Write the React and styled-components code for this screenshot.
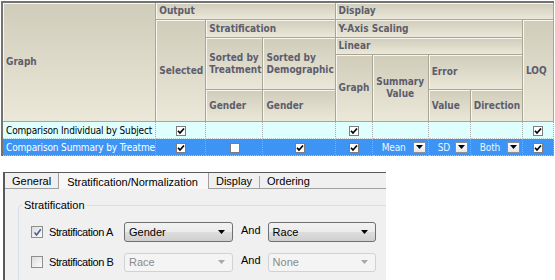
import React from 'react';
import styled, { createGlobalStyle } from 'styled-components';

const GlobalStyle = createGlobalStyle`
  body {
    margin: 0;
    background: #fff;
    overflow: hidden;
    font-family: "DejaVu Sans Condensed", "Liberation Sans", sans-serif;
  }
`;

const Page = styled.div`
  padding: 1px 0 0 1px;
`;

// ---- grid (top) ----

const Grid = styled.table`
  width: 553px;
  table-layout: fixed;
  border-collapse: separate;
  border-spacing: 0;
  border-top: 2px solid #737373;
  border-left: 2px solid #737373;
  font-size: 10px;
`;

const HeadRow = styled.tr`
  height: ${p => p.$h}px;
`;

const Th = styled.th`
  padding: 0 3px;
  text-align: ${p => (p.$center ? 'center' : 'left')};
  vertical-align: middle;
  font-weight: bold;
  color: #5d5d6d;
  line-height: 12px;
  background: linear-gradient(#d0ccba, #ebe8d9);
  border-right: 1px solid #a9a696;
  border-bottom: 1px solid #a9a696;
  box-shadow: inset 1px 1px 0 #f7f6ef;
`;

const DataRow = styled.tr`
  height: 17px;
  background: ${p => (p.$selected ? '#3d94f4' : '#dfffff')};
  color: ${p => (p.$selected ? '#fff' : '#000')};
`;

const Td = styled.td`
  padding: 0 2px 0 3px;
  white-space: nowrap;
  overflow: hidden;
  letter-spacing: -0.15px;
  text-align: ${p => (p.$center ? 'center' : 'left')};
  border-right: 1px dotted #a8a8a8;
  border-bottom: 1px dotted #c4c4c4;
  line-height: 15px;
`;

const ComboCell = styled.div`
  display: flex;
  align-items: center;
  justify-content: space-between;
  padding-left: 6px;
  color: #eef4ff;
`;

const GridCheck = styled.span`
  display: inline-flex;
  align-items: center;
  justify-content: center;
  width: 10px;
  height: 10px;
  box-sizing: border-box;
  border: 1px solid #7d7d7d;
  background: #fff;
  vertical-align: middle;
`;

const DropBtn = styled.span`
  display: flex;
  align-items: center;
  justify-content: center;
  width: 13px;
  height: 11px;
  box-sizing: border-box;
  border: 1px solid #8e8e8e;
  background: linear-gradient(#ffffff, #e6e6e6);
`;

const Tick = ({ color = '#000' }) => (
  <svg width="8" height="8" viewBox="0 0 8 8">
    <path d="M1 3.8 L3 6 L7 1.5" fill="none" stroke={color} strokeWidth="1.7" />
  </svg>
);

const Arrow = ({ color = '#000', w = 7, h = 4 }) => (
  <svg width={w} height={h} viewBox={`0 0 ${w} ${h}`}>
    <polygon points={`0,0 ${w},0 ${w / 2},${h}`} fill={color} />
  </svg>
);

const Check = ({ on }) => <GridCheck>{on && <Tick />}</GridCheck>;

const Drop = ({ value }) => (
  <ComboCell>
    <span>{value}</span>
    <DropBtn>
      <Arrow />
    </DropBtn>
  </ComboCell>
);

// ---- dialog (bottom) ----

const Dialog = styled.div`
  margin: 16px 0 0 2px;
  width: 383px;
  height: 108px;
  box-sizing: border-box;
  border-top: 1px solid #5a5a5a;
  border-left: 2px solid #5a5a5a;
  background: #f0f0f0;
  font-family: "Liberation Sans", Arial, sans-serif;
  font-size: 11px;
  color: #000;
  display: flex;
  flex-direction: column;
  overflow: hidden;
`;

const TabStrip = styled.div`
  display: flex;
  height: 18px;
  border-bottom: 1px solid #a0a0a0;
`;

const Tab = styled.div`
  display: flex;
  align-items: center;
  padding: ${p => (p.$active ? '1px 10px 0 8px' : '1px 7px 0')};
  background: ${p => (p.$active ? '#f7f7f7' : 'transparent')};
  border-left: ${p => (p.$active ? '1px solid #a0a0a0' : 'none')};
  border-right: ${p => (p.$active ? '1px solid #a0a0a0' : 'none')};
  margin-bottom: ${p => (p.$active ? '-1px' : '0')};
`;

const TabSep = styled.span`
  width: 1px;
  height: 12px;
  margin-top: 3px;
  background: #a8a8a8;
`;

const Panel = styled.div`
  flex: 1;
  padding: 10px 0 0 13px;
`;

const Group = styled.fieldset`
  margin: 0;
  width: 500px;
  padding: 2px 0 20px 3px;
  border: 1px solid #d5dfe5;
  border-radius: 3px;
`;

const Legend = styled.legend`
  padding: 0 2px;
  line-height: 12px;
`;

const OptRow = styled.div`
  display: flex;
  align-items: center;
  height: 20px;
  margin: ${p => (p.$first ? '9px' : '10px')} 0 0 9px;
`;

const OptLabel = styled.label`
  display: flex;
  align-items: center;
  gap: 6px;
  width: 93px;
  letter-spacing: -0.4px;
`;

const WinCheck = styled.span`
  display: inline-flex;
  align-items: center;
  justify-content: center;
  width: 12px;
  height: 12px;
  box-sizing: border-box;
  border: 1px solid #8e8f8f;
  background: linear-gradient(135deg, #dcdcdc, #fcfcfc);
`;

const Combo = styled.div`
  width: ${p => p.$w}px;
  height: ${p => (p.$disabled ? 19 : 20)}px;
  box-sizing: border-box;
  display: flex;
  align-items: center;
  justify-content: space-between;
  padding: 0 7px 0 4px;
  border: 1px solid ${p => (p.$disabled ? '#d2d2d2' : '#707070')};
  border-radius: 3px;
  color: ${p => (p.$disabled ? '#8a8a8a' : '#000')};
  background: ${p =>
    p.$disabled
      ? '#f4f4f4'
      : 'linear-gradient(#f2f2f2 0%, #ebebeb 50%, #dddddd 51%, #cfcfcf 100%)'};
`;

const And = styled.span`
  margin: 0 7px 5px 8px;
`;

const Option = ({ label, checked, first, a, b, disabled }) => (
  <OptRow $first={first}>
    <OptLabel>
      <WinCheck>
        {checked && (
          <svg width="9" height="9" viewBox="0 0 9 9">
            <path d="M1.5 4.5 L3.6 7 L7.8 1.3" fill="none" stroke="#4a5f97" strokeWidth="1.6" />
          </svg>
        )}
      </WinCheck>
      {label}
    </OptLabel>
    <Combo $w={109} $disabled={disabled}>
      <span>{a}</span>
      <Arrow color={disabled ? '#a8a8a8' : '#000'} />
    </Combo>
    <And>And</And>
    <Combo $w={108} $disabled={disabled}>
      <span>{b}</span>
      <Arrow color={disabled ? '#a8a8a8' : '#000'} />
    </Combo>
  </OptRow>
);

export default function App() {
  return (
    <Page>
      <GlobalStyle />
      <Grid>
        <colgroup>
          <col style={{ width: 153 }} />
          <col style={{ width: 50 }} />
          <col style={{ width: 57 }} />
          <col style={{ width: 72 }} />
          <col style={{ width: 37 }} />
          <col style={{ width: 56 }} />
          <col style={{ width: 42 }} />
          <col style={{ width: 52 }} />
          <col style={{ width: 31 }} />
        </colgroup>
        <thead>
          <HeadRow $h={17}>
            <Th rowSpan={5}>Graph</Th>
            <Th colSpan={3}>Output</Th>
            <Th colSpan={5}>Display</Th>
          </HeadRow>
          <HeadRow $h={18}>
            <Th rowSpan={4}>Selected</Th>
            <Th colSpan={2}>Stratification</Th>
            <Th colSpan={4}>Y-Axis Scaling</Th>
            <Th rowSpan={4}>LOQ</Th>
          </HeadRow>
          <HeadRow $h={17}>
            <Th rowSpan={2}>Sorted by Treatment</Th>
            <Th rowSpan={2}>Sorted by Demographic</Th>
            <Th colSpan={4}>Linear</Th>
          </HeadRow>
          <HeadRow $h={35}>
            <Th rowSpan={2}>Graph</Th>
            <Th rowSpan={2} $center>
              Summary Value
            </Th>
            <Th colSpan={2}>Error</Th>
          </HeadRow>
          <HeadRow $h={32}>
            <Th>Gender</Th>
            <Th>Gender</Th>
            <Th>Value</Th>
            <Th>Direction</Th>
          </HeadRow>
        </thead>
        <tbody>
          <DataRow>
            <Td>Comparison Individual by Subject</Td>
            <Td $center><Check on /></Td>
            <Td />
            <Td />
            <Td $center><Check on /></Td>
            <Td />
            <Td />
            <Td />
            <Td $center><Check on /></Td>
          </DataRow>
          <DataRow $selected>
            <Td>Comparison Summary by Treatme</Td>
            <Td $center><Check on /></Td>
            <Td $center><Check /></Td>
            <Td $center><Check on /></Td>
            <Td $center><Check on /></Td>
            <Td><Drop value="Mean" /></Td>
            <Td><Drop value="SD" /></Td>
            <Td><Drop value="Both" /></Td>
            <Td $center><Check on /></Td>
          </DataRow>
        </tbody>
      </Grid>

      <Dialog>
        <TabStrip>
          <Tab>General</Tab>
          <Tab $active>Stratification/Normalization</Tab>
          <Tab>Display</Tab>
          <TabSep />
          <Tab>Ordering</Tab>
        </TabStrip>
        <Panel>
          <Group>
            <Legend>Stratification</Legend>
            <Option first checked label="Stratification A" a="Gender" b="Race" />
            <Option disabled label="Stratification B" a="Race" b="None" />
          </Group>
        </Panel>
      </Dialog>
    </Page>
  );
}
